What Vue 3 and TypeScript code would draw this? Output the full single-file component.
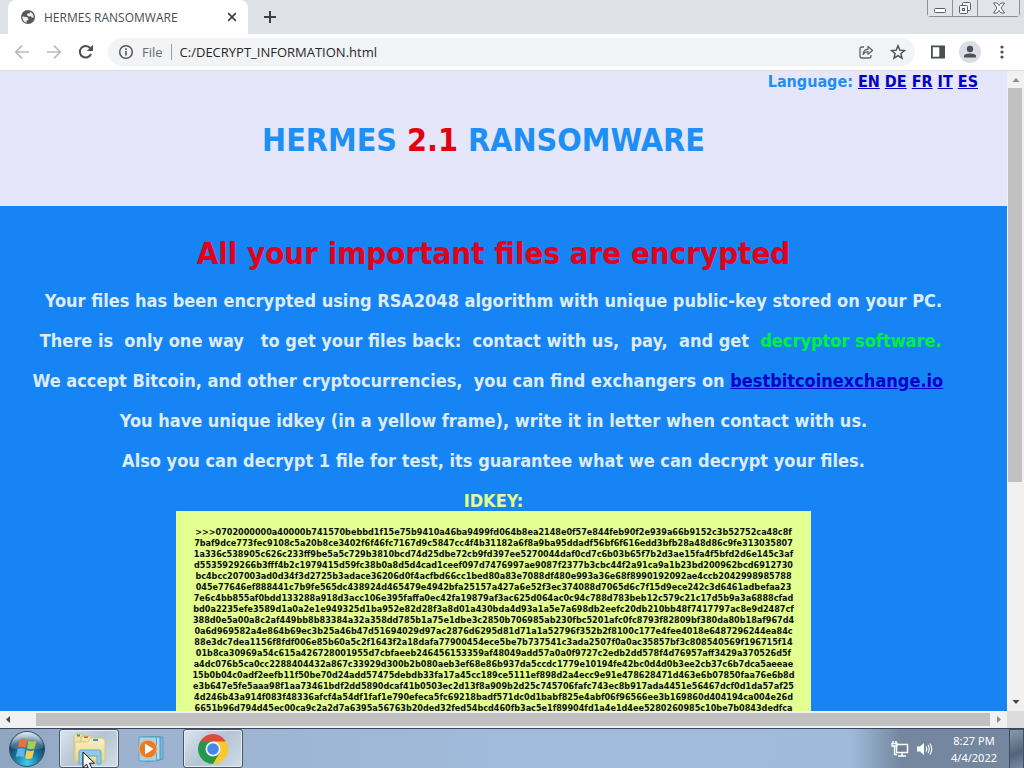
<script setup lang="ts">
const languages: string[] = ['EN', 'DE', 'FR', 'IT', 'ES']

const keyLines: string[] = [
  '>>>0702000000a40000b741570bebbd1f15e75b9410a46ba9499fd064b8ea2148e0f57e844feb90f2e939a66b9152c3b52752ca48c8f',
  '7baf9dce773fec9108c5a20b8ce3402f6f46fc7167d9c5847cc4f4b31182a6f8a9ba95ddadf56bf6f616edd3bfb28a48d86c9fe313035807',
  '1a336c538905c626c233ff9be5a5c729b3810bcd74d25dbe72cb9fd397ee5270044daf0cd7c6b03b65f7b2d3ae15fa4f5bfd2d6e145c3af',
  'd5535929266b3fff4b2c1979415d59fc38b0a8d5d4cad1ceef097d7476997ae9087f2377b3cbc44f2a91ca9a1b23bd200962bcd6912730',
  'bc4bcc207003ad0d34f3d2725b3adace36206d0f4acfbd66cc1bed80a83e7088df480e993a36e68f8990192092ae4ccb2042998985788',
  '045e77646ef888441c7b9fe565dc438924d465479e4942bfa25157a427a6e52f3ec374088d7065d6c7f15d9ece242c3d6461adbefaa23',
  '7e6c4bb855af0bdd133288a918d3acc106e395faffa0ec42fa19879af3ac625d064ac0c94c788d783beb12c579c21c17d5b9a3a6888cfad',
  'bd0a2235efe3589d1a0a2e1e949325d1ba952e82d28f3a8d01a430bda4d93a1a5e7a698db2eefc20db210bb48f7417797ac8e9d2487cf',
  '388d0e5a00a8c2af449bb8b83384a32a358dd785b1a75e1dbe3c2850b706985ab230fbc5201afc0fc8793f82809bf380da80b18af967d4',
  '0a6d969582a4e864b69ec3b25a46b47d51694029d97ac2876d6295d81d71a1a52796f352b2f8100c177e4fee4018e6487296244ea84c',
  '88e3dc7dea1156f8fdf006e85b60a5c2f1643f2a18dafa77900454ece5be7b737541c3ada2507f0a0ac35857bf3c808540569f196715f14',
  '01b8ca30969a54c615a426728001955d7cbfaeeb246456153359af48049add57a0a0f9727c2edb2dd578f4d76957aff3429a370526d5f',
  'a4dc076b5ca0cc2288404432a867c33929d300b2b080aeb3ef68e86b937da5ccdc1779e10194fe42bc0d4d0b3ee2cb37c6b7dca5aeeae',
  '15b0b04c0adf2eefb11f50be70d24add57475debdb33fa17a45cc189ce5111ef898d2a4ecc9e91e478628471d463e6b07850faa76e6b8d',
  'e3b647e5fe5aaa98f1aa73461bdf2dd5890dcaf41b0503ec2d13f8a909b2d25c745706fafc743ec8b917ada4451e56467dcf0d1da57af25',
  '4d246b43a914f083f48336afcf4a54df1faf1e790efeca5fc69218badf571dc0d1babf825e4abf06f96566ee3b169860d404194ca004e26d',
  '6651b96d794d45ec00ca9c2a2d7a6395a56763b20ded32fed54bcd460fb3ac5e1f89904fd1a4e1d4ee5280260985c10be7b0843dedfca',
]
</script>

<template>
  <div class="desktop">
    <header class="tabstrip">
      <div class="tab">
        <svg class="globe" viewBox="0 0 16 16" width="16" height="16" aria-hidden="true">
          <circle cx="8" cy="8" r="7" fill="#55585d" />
          <path d="M2.3 7.500C3.500 7.500 5 8 7.500 8.300L8.500 10.500 6.500 12 6.500 13.700C4 13 2.200 11 2.300 7.500Z M8 2.400 10.500 2.900 9.500 4.300 7.300 4.800 7 6.300 8.500 7.500 11 7.200 11.800 8.800 13.700 8.500C13.500 4.500 11 2.300 8 2.400Z" fill="#eceef0" />
        </svg>
        <span class="tab-title">HERMES RANSOMWARE</span>
        <button class="plain" aria-label="Close tab">
          <svg viewBox="0 0 16 16" width="16" height="16"><path d="M4.200 4.200 11.800 11.800M11.800 4.200 4.200 11.800" stroke="#3c4043" stroke-width="1.700" /></svg>
        </button>
      </div>
      <button class="plain new-tab" aria-label="New tab">
        <svg viewBox="0 0 16 16" width="16" height="16"><path d="M8 2V14M2 8H14" stroke="#3c4043" stroke-width="2" /></svg>
      </button>
      <div class="window-buttons">
        <button aria-label="Minimize">
          <svg viewBox="0 0 16 16" width="16" height="16"><rect x="2.500" y="8.500" width="11" height="4" rx="1" fill="#fff" stroke="#5b6068" /></svg>
        </button>
        <button aria-label="Restore">
          <svg viewBox="0 0 16 16" width="16" height="16" fill="#f4f5f7" stroke="#5b6068"><rect x="5.500" y="2.500" width="8" height="8" rx="1" /><rect x="2.500" y="5.500" width="8" height="8" rx="1" /><rect x="5.500" y="8.500" width="2" height="2" /></svg>
        </button>
        <button class="wide" aria-label="Close window">
          <svg viewBox="0 0 16 16" width="16" height="16"><path d="M2.500 3H6L8 5.500 10 3H13.500L10 8 13.500 13H10L8 10.500 6 13H2.500L6 8Z" fill="#fff" stroke="#5b6068" /></svg>
        </button>
      </div>
    </header>

    <nav class="toolbar" aria-label="Browser toolbar">
      <button class="plain" aria-label="Back">
        <svg viewBox="0 0 16 16" width="16" height="16"><path d="M15 8H2M8 1.700 1.700 8 8 14.300" fill="none" stroke="#b9bbbe" stroke-width="1.700" /></svg>
      </button>
      <button class="plain" aria-label="Forward">
        <svg viewBox="0 0 16 16" width="16" height="16"><path d="M1 8H14M8 1.700 14.300 8 8 14.300" fill="none" stroke="#b9bbbe" stroke-width="1.700" /></svg>
      </button>
      <button class="plain" aria-label="Reload">
        <svg viewBox="0 0 16 16" width="16" height="16"><path d="M13 10A5.800 5.800 0 1 1 12.200 4.100" fill="none" stroke="#4b4e52" stroke-width="2" /><path d="M15 .8V7H8.800Z" fill="#4b4e52" /></svg>
      </button>
      <div class="omnibox">
        <svg viewBox="0 0 16 16" width="16" height="16" aria-hidden="true"><circle cx="8" cy="8" r="6.300" fill="none" stroke="#55585d" stroke-width="1.500" /><path d="M8 7V11.500M8 4.300V6" stroke="#55585d" stroke-width="1.600" /></svg>
        <label class="scheme" for="address">File</label>
        <input id="address" type="text" value="C:/DECRYPT_INFORMATION.html" />
        <button class="plain" aria-label="Share">
          <svg viewBox="0 0 16 16" width="16" height="16" fill="none" stroke="#5f6368" stroke-width="1.300" stroke-linejoin="round"><path d="M6 3H4Q2 3 2 5V12Q2 14 4 14H11Q13 14 13 12V11" /><path d="M5 10.500Q5.500 5.500 10 5.200V2.500L14.500 6.500 10 10.300V7.700Q7 7.600 5 10.500Z" /></svg>
        </button>
        <button class="plain" aria-label="Bookmark">
          <svg viewBox="0 0 16 16" width="16" height="16"><path d="M8 1.700 9.800 6.100 14.500 6.500 10.900 9.500 12 14.200 8 11.700 4 14.200 5.100 9.500 1.500 6.500 6.200 6.100Z" fill="none" stroke="#4b4e52" stroke-width="1.400" /></svg>
        </button>
      </div>
      <button class="plain" aria-label="Side panel">
        <svg viewBox="0 0 16 16" width="16" height="16"><path d="M1 1.500H15V14.500H1ZM2.800 3.300V12.700H9.300V3.300Z" fill="#4b4e52" fill-rule="evenodd" /></svg>
      </button>
      <button class="plain avatar" aria-label="Profile">
        <svg viewBox="0 0 22 22" width="22" height="22"><circle cx="11" cy="11" r="11" fill="#dadde2" /><circle cx="11" cy="8" r="3.200" fill="#4a505c" /><path d="M5 16.500V15Q5 12.500 11 12.500T17 15V16.500Z" fill="#4a505c" /></svg>
      </button>
      <button class="plain" aria-label="Menu">
        <svg viewBox="0 0 16 16" width="16" height="16" fill="#4b4e52"><circle cx="8" cy="3" r="1.600" /><circle cx="8" cy="8" r="1.600" /><circle cx="8" cy="13" r="1.600" /></svg>
      </button>
    </nav>

    <div class="view">
      <main class="page">
        <section class="banner">
          <p class="languages">
            Language: <template v-for="code in languages" :key="code"><a href="#">{{ code }}</a>{{ ' ' }}</template>
          </p>
          <h1>HERMES <span class="red">2.1</span> RANSOMWARE&nbsp;&nbsp;</h1>
        </section>
        <section class="note">
          <h2>All your important files are encrypted</h2>
          <p>Your files has been encrypted using RSA2048 algorithm with unique public-key stored on your PC.</p>
          <p>There is&nbsp; only one way &nbsp; to get your files back:&nbsp; contact with us,&nbsp; pay,&nbsp; and get&nbsp; <span class="green">decryptor software.</span>&nbsp;</p>
          <p>We accept Bitcoin, and other cryptocurrencies,&nbsp; you can find exchangers on <a href="#">bestbitcoinexchange.io</a>&nbsp;&nbsp;</p>
          <p>You have unique idkey (in a yellow frame), write it in letter when contact with us.</p>
          <p>Also you can decrypt 1 file for test, its guarantee what we can decrypt your files.</p>
          <h3>IDKEY:</h3>
          <div class="key">
            <div v-for="line in keyLines" :key="line">{{ line }}</div>
          </div>
        </section>
      </main>
      <div class="vbar" aria-hidden="true">
        <svg viewBox="0 0 16 17" width="16" height="17"><path d="M4.500 11H11.500L8 7Z" fill="#8b8b8b" /></svg>
        <div class="track"><div class="thumb"></div></div>
        <svg viewBox="0 0 16 17" width="16" height="17"><path d="M4.500 6H11.500L8 10Z" fill="#454545" /></svg>
      </div>
      <div class="hbar" aria-hidden="true">
        <svg viewBox="0 0 17 17" width="17" height="17"><path d="M10 5V12L6 8.500Z" fill="#454545" /></svg>
        <div class="track"><div class="thumb"></div></div>
        <svg viewBox="0 0 17 17" width="17" height="17"><path d="M7 5V12L11 8.500Z" fill="#8b8b8b" /></svg>
      </div>
      <div class="corner"></div>
    </div>

    <footer class="taskbar">
      <button class="plain start" aria-label="Start">
        <svg viewBox="0 0 38 38" width="38" height="38">
          <defs>
            <radialGradient id="orb" cx="50%" cy="90%" r="80%"><stop offset="0" stop-color="#3fd0f0" /><stop offset=".45" stop-color="#17789f" /><stop offset=".8" stop-color="#16435f" /><stop offset="1" stop-color="#7d9fb6" /></radialGradient>
            <linearGradient id="shine" x2="0" y2="1"><stop stop-color="#e7f1f7" stop-opacity=".85" /><stop offset="1" stop-color="#8fb0c4" stop-opacity=".15" /></linearGradient>
          </defs>
          <circle cx="19" cy="19" r="17.500" fill="url(#orb)" stroke="#32536d" />
          <path d="M3 18A16 16 0 0 1 35 18Q19 23 3 18Z" fill="url(#shine)" />
          <path d="M12 9.500Q15.500 8 19 10L17.500 18Q14 16 10 17.500Z" fill="#e8733a" />
          <path d="M20.500 10.500Q24 12.500 28.500 10.500L26.500 18.500Q23 20 19 18.300Z" fill="#a9cb50" />
          <path d="M9.500 19Q13.500 17.500 17.200 19.500L15.500 27.500Q12 25.500 7.800 27Z" fill="#5eb5e6" />
          <path d="M18.700 20Q22.500 22 26.200 20L24.200 28Q20.500 30 17 28Z" fill="#f4cf4f" />
        </svg>
      </button>
      <button class="task active" aria-label="File Explorer">
        <svg viewBox="0 0 36 34" width="36" height="34">
          <defs><linearGradient id="folder" x2="0" y2="1"><stop stop-color="#f9efc0" /><stop offset="1" stop-color="#ecd98a" /></linearGradient></defs>
          <path d="M3 7V4L5 2H12L13 5V27H3Z" fill="#efe2a4" stroke="#cdbf84" />
          <path d="M10 8V5L12 4H20L21 7V28H10Z" fill="#f3e6ae" stroke="#cdbf84" />
          <path d="M17 10 19 6H32L34 9V29H4V10Z" fill="url(#folder)" stroke="#d5c68a" />
          <path d="M6 2.500H9V4.500H6Z" fill="#36a145" /><path d="M13 4.500H17V6H13Z" fill="#d8573a" /><path d="M22 7H27V9H22Z" fill="#4a8fd6" />
          <path d="M8 32V20Q8 18 10 18H28Q30 18 30 20V32H26V24H12V32Z" fill="#8ccce6" stroke="#69a9c6" />
        </svg>
        <svg class="pointer" viewBox="0 0 14 20" width="14" height="20" aria-hidden="true"><path d="M1 1V16.500L4.600 13.200 7.200 19 10 17.700 7.500 12.200H12.500Z" fill="#fff" stroke="#111" /></svg>
      </button>
      <button class="task" aria-label="Media Player">
        <svg viewBox="0 0 30 30" width="30" height="30">
          <path d="M10 3H27V25L10 28Z" fill="#7db7d5" stroke="#5c9dbf" /><path d="M7 3H24V26H7Z" fill="#b5dff0" stroke="#4b94bd" /><path d="M3 3H20.500V27H3Z" fill="#a4d4e8" stroke="#5ba1c4" />
          <circle cx="12" cy="15" r="9" fill="#ec7a22" stroke="#f6b57c" /><path d="M9 9.500V20.500L17.500 15Z" fill="#fff" />
        </svg>
      </button>
      <button class="task active" aria-label="Chrome">
        <svg viewBox="0 0 32 32" width="32" height="32">
          <path d="M16 16 3.010 8.500A15 15 0 0 1 28.990 8.500Z" fill="#dd4b3e" />
          <path d="M16 16V31A15 15 0 0 1 3.010 8.500Z" fill="#23974c" />
          <path d="M16 16 28.990 8.500A15 15 0 0 1 16 31Z" fill="#f7c92f" />
          <path d="M16 8.500H29A15 15 0 0 1 16 31L22.500 19.700Z" fill="#f7c92f" />
          <path d="M9.500 19.700 3 8.500 16 8.500Z" fill="#23974c" />
          <path d="M9.500 19.700 16 31 22.500 19.700Z" fill="#23974c" />
          <circle cx="16" cy="16" r="7.500" fill="#f3f6f8" /><circle cx="16" cy="16" r="5.800" fill="#4688e8" />
        </svg>
      </button>
      <div class="tray">
        <svg viewBox="0 0 18 18" width="18" height="18" aria-label="Network" role="img"><rect x="5.500" y="4.500" width="11" height="8" fill="#6f7f92" stroke="#fff" stroke-width="1.500" /><path d="M7 16H15M11 13V16M2 1V3M5 1V3M1 3.500H6V6H1ZM3.500 6V14.500H6" stroke="#fff" stroke-width="1.400" fill="none" /></svg>
        <svg viewBox="0 0 18 18" width="18" height="18" aria-label="Volume" role="img"><path d="M2 6.500H5L9 3V15L5 11.500H2Z" fill="#fff" /><path d="M11 6.500Q12.500 9 11 11.500M13 5Q15.500 9 13 13M15 3.500Q18.500 9 15 14.500" fill="none" stroke="#fff" stroke-width="1.100" /></svg>
        <div class="clock"><time>8:27 PM</time><time>4/4/2022</time></div>
      </div>
      <button class="peek" aria-label="Show desktop"></button>
    </footer>
  </div>
</template>

<style>
html, body, #app { height: 100%; }
</style>

<style scoped>
.desktop { display: flex; flex-direction: column; height: 100%; min-height: 400px; overflow: hidden; font-family: "Open Sans", "Noto Sans", sans-serif; font-size: 12px; color: #4a4d51; }
svg { display: block; flex: none; }
button { font: inherit; }
.plain { display: flex; padding: 0; border: 0; background: none; }

.tabstrip { display: flex; align-items: stretch; height: 34px; flex: none; background: #dee1e6; padding-left: 8px; }
.tab { display: flex; align-items: center; gap: 8px; width: 240px; box-sizing: border-box; padding: 0 8px 0 12px; background: #fff; border-radius: 8px 8px 0 0; }
.tab-title { flex: 1; white-space: nowrap; }
.new-tab { align-items: center; margin-left: 14px; }
.window-buttons { display: flex; height: 17px; margin: 0 4px 0 auto; box-sizing: border-box; border: 1px solid #8d9197; border-top: 0; border-radius: 0 0 4px 4px; }
.window-buttons button { display: flex; align-items: center; justify-content: center; width: 25px; padding: 0; border: 0; border-right: 1px solid #8d9197; background: #e1e4e8; }
.window-buttons .wide { width: 41px; border-right: 0; }

.toolbar { display: flex; align-items: center; gap: 16px; height: 36px; flex: none; padding: 0 14px; background: #fff; border-bottom: 1px solid #dcdee2; }
.omnibox { display: flex; align-items: center; gap: 8px; flex: 1; height: 28px; margin: 0 -1px 0 -2px; padding: 0 9px 0 10px; border-radius: 14px; background: #f1f3f4; }
.omnibox .plain + .plain { margin-left: 8px; }
.scheme { padding-right: 8px; border-right: 1px solid #9a9da1; font-size: 13px; line-height: 16px; color: #6a6d71; }
.omnibox input { flex: 1; min-width: 0; padding: 0; border: 0; background: none; font: inherit; font-size: 13px; color: #26282b; outline: 0; }
.avatar { margin: 0 -3px; }

.view { flex: 1; min-height: 0; display: grid; grid-template: minmax(0, 1fr) 17px / minmax(0, 1fr) 17px; }
.page { overflow: hidden; background: #1684f4; font-family: "DejaVu Sans Condensed", "DejaVu Sans", sans-serif; font-stretch: condensed; font-weight: bold; font-size: 18px; line-height: 20px; text-align: center; }
.page p, h1, h2, h3 { margin: 0; }
.page a { color: #0000c8; }
.banner { box-sizing: border-box; height: 135px; padding: 1px 20px 0 0; background: #e6e6fa; color: #1e8ff5; }
.languages { padding-right: 9px; font-size: 16px; text-align: right; }
h1 { padding-top: 28px; font-size: 32px; line-height: 40px; }
.red { color: #e3000f; }
.green { color: #00f040; }
.note { padding: 27px 20px 0 0; color: #dcecfd; }
h2 { margin-bottom: 18px; font-size: 31px; line-height: 40px; color: #e3001b; }
.note p { margin-bottom: 20px; }
.note p, .key { white-space: nowrap; }
h3 { font-size: 18px; line-height: 20px; color: #e3ff8f; }
.key { width: 635px; box-sizing: border-box; margin: 0 auto; padding: 16px; background: #e3ff8f; color: #0c0e06; font-size: 9px; line-height: 11px; }

.vbar, .hbar { display: flex; background: #f1f1f1; }
.vbar { flex-direction: column; padding-left: 1px; }
.track { flex: 1; }
.thumb { background: #c1c1c1; }
.vbar .thumb { height: 65%; margin-right: 2px; }
.hbar .thumb { height: 13px; margin: 2px 0 0 19px; }
.corner { background: #dcdcdc; }

.taskbar { display: flex; align-items: stretch; height: 40px; flex: none; box-sizing: border-box; border-top: 1px solid #39465a; background: linear-gradient(90deg, #8fa5bf 0, #9cb2cf 12%, #a1bbdc 50%, #9fbbdc 83%, #75879f 88%, #75879f 100%); }
.start { align-items: center; margin: 0 13px 0 8px; }
.task { position: relative; display: flex; align-items: center; justify-content: center; width: 60px; padding: 0; margin-right: 2px; border: 1px solid transparent; border-radius: 3px; background: none; }
.task.active { border-color: #46566b; background: linear-gradient(135deg, #dbe4ec, #b4c4d3 50%, #d2dde6); box-shadow: inset 0 0 0 1px #e5edf3; }
.pointer { position: absolute; left: 22px; top: 21px; }
.tray { display: flex; align-items: center; gap: 6px; margin-left: auto; color: #fff; }
.clock { display: flex; flex-direction: column; width: 70px; text-align: center; font-family: "Noto Sans", sans-serif; font-size: 11px; line-height: 17px; }
.peek { width: 15px; padding: 0; border: 1px solid #3f4f66; border-bottom: 0; background: linear-gradient(160deg, #8999ad, #55647b 60%, #7b8ba2); }
</style>
